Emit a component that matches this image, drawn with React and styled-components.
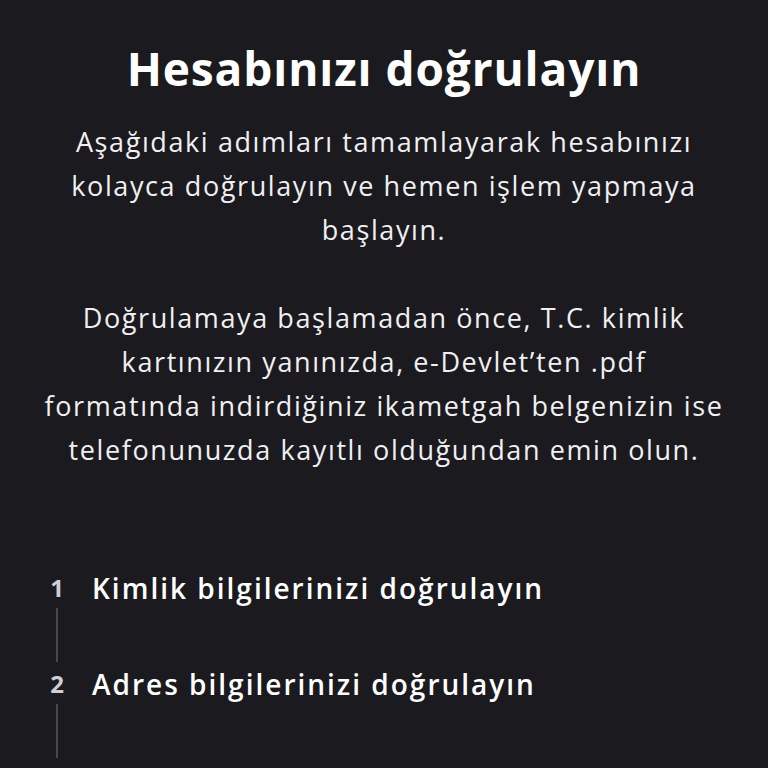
import React from "react";
import styled, { createGlobalStyle } from "styled-components";

const GlobalStyle = createGlobalStyle`
  html, body {
    margin: 0;
    padding: 0;
    background: #1b1b1f;
  }
  body {
    font-family: "Open Sans", "Noto Sans", sans-serif;
    color: #ffffff;
  }
`;

const Page = styled.div`
  min-height: 768px;
  background: #1b1b1f;
  padding: 38px 30px 0;
  box-sizing: border-box;
`;

const Title = styled.h1`
  margin: 0;
  font-size: 46px;
  font-weight: 700;
  line-height: 60px;
  letter-spacing: 0.9px;
  text-align: center;
`;

const Intro = styled.div`
  margin-top: 22px;
  text-align: center;
  font-size: 27px;
  line-height: 44px;
  letter-spacing: 1.6px;
  color: #f0f0f2;
`;

const Paragraph = styled.p`
  margin: 0;
  white-space: nowrap;
  & + & {
    margin-top: 44px;
  }
`;

const Steps = styled.ol`
  list-style: none;
  margin: 96px 0 0;
  padding: 0 0 0 10px;
`;

const Step = styled.li`
  display: grid;
  grid-template-columns: 34px 1fr;
  column-gap: 18px;
  align-items: center;
`;

const StepNumber = styled.span`
  font-size: 24px;
  font-weight: 700;
  line-height: 40px;
  color: #cfcfd3;
  text-align: center;
`;

const StepLabel = styled.span`
  font-size: 28px;
  font-weight: 600;
  line-height: 40px;
  letter-spacing: 2px;
  color: #ffffff;
  white-space: nowrap;
`;

const Connector = styled.li`
  width: 34px;
  height: 56px;
  display: flex;
  justify-content: center;
  &::before {
    content: "";
    width: 2px;
    height: 54px;
    background: #48484e;
  }
`;

const steps = [
  "Kimlik bilgilerinizi doğrulayın",
  "Adres bilgilerinizi doğrulayın",
  "Telefon numaranızı doğrulayın",
];

export default function App() {
  return (
    <Page>
      <GlobalStyle />
      <Title>Hesabınızı doğrulayın</Title>
      <Intro>
        <Paragraph>
          Aşağıdaki adımları tamamlayarak hesabınızı
          <br />
          kolayca doğrulayın ve hemen işlem yapmaya
          <br />
          başlayın.
        </Paragraph>
        <Paragraph>
          Doğrulamaya başlamadan önce, T.C. kimlik
          <br />
          kartınızın yanınızda, e-Devlet’ten .pdf
          <br />
          formatında indirdiğiniz ikametgah belgenizin ise
          <br />
          telefonunuzda kayıtlı olduğundan emin olun.
        </Paragraph>
      </Intro>
      <Steps>
        {steps.map((s, i) => (
          <React.Fragment key={s}>
            <Step>
              <StepNumber>{i + 1}</StepNumber>
              <StepLabel>{s}</StepLabel>
            </Step>
            {i < steps.length - 1 && <Connector />}
          </React.Fragment>
        ))}
      </Steps>
    </Page>
  );
}
